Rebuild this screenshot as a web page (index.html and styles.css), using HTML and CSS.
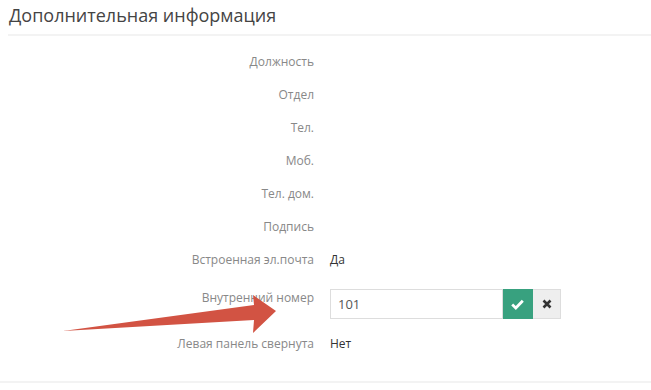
FILE: index.html
```html
<!DOCTYPE html>
<html lang="ru">
<head>
<meta charset="UTF-8">
<title>Дополнительная информация</title>
<link rel="stylesheet" href="styles.css">
</head>
<body>
<div class="section">
  <h3 class="section-title">Дополнительная информация</h3>
  <div class="fields">
    <div class="row"><div class="label">Должность</div><div class="value"></div></div>
    <div class="row"><div class="label">Отдел</div><div class="value"></div></div>
    <div class="row"><div class="label">Тел.</div><div class="value"></div></div>
    <div class="row"><div class="label">Моб.</div><div class="value"></div></div>
    <div class="row"><div class="label">Тел. дом.</div><div class="value"></div></div>
    <div class="row"><div class="label">Подпись</div><div class="value"></div></div>
    <div class="row"><div class="label">Встроенная эл.почта</div><div class="value">Да</div></div>
    <div class="row row-edit">
      <div class="label">Внутренний номер</div>
      <div class="value">
        <div class="inline-edit">
          <input class="edit-input" type="text" value="101">
          <button class="btn btn-ok">
            <svg width="13" height="11" viewBox="0 0 13 11"><path d="M1.2 5.6 L4.8 9 L11.8 1.8" fill="none" stroke="#fff" stroke-width="2.8" stroke-linejoin="miter"/></svg>
          </button>
          <button class="btn btn-cancel">
            <svg width="10" height="10" viewBox="0 0 10 10"><path d="M1.5 1.5 L8.5 8.5 M8.5 1.5 L1.5 8.5" stroke="#333" stroke-width="2.6"/></svg>
          </button>
        </div>
      </div>
    </div>
    <div class="row"><div class="label">Левая панель свернута</div><div class="value">Нет</div></div>
  </div>
  <div class="section-end"></div>
</div>

<!-- annotation arrow over the form -->
<svg class="arrow" width="651" height="390" viewBox="0 0 651 390">
  <polygon points="63,331 254,305 253,295 276,311 253,333 254,320" fill="#d25343"/>
</svg>
</body>
</html>
```

FILE: styles.css
```css
body{
  margin: 0;
  background: #fff;
  font-family: 'Open Sans', 'Liberation Sans', sans-serif;
  font-size: 12px;
  color: #333;
  position: relative;
}
.section-title{
  margin: 0 0 0 8px;
  padding: 4px 0 8px 1px;
  font-size: 18px;
  font-weight: 400;
  line-height: 22px;
  color: #444;
  border-bottom: 2px solid #f3f3f3;
}
.fields{
  padding-top: 9px;
}
.row{
  display: grid;
  grid-template-columns: 314px 1fr;
  column-gap: 16px;
  padding: 8px 0;
  line-height: 17px;
}
.label{
  text-align: right;
  color: #888;
}
.value{
  color: #333;
}
.row-edit{
  padding: 13px 0 8px;
}
.inline-edit{
  display: flex;
  height: 30px;
}
.edit-input{
  width: 173px;
  height: 30px;
  box-sizing: border-box;
  border: 1px solid #ddd;
  padding: 0 7px;
  font-family: inherit;
  font-size: 13px;
  color: #555;
  outline: none;
}
.btn{
  height: 30px;
  border: 1px solid #ddd;
  border-left: none;
  padding: 0;
  display: flex;
  align-items: center;
  justify-content: center;
}
.btn-ok{
  width: 30px;
  background: #38a17f;
  border-color: #38a17f;
}
.btn-cancel{
  width: 28px;
  background: #eee;
}
.section-end{
  margin-top: 21px;
  border-bottom: 2px solid #f3f3f3;
}
.arrow{
  position: absolute;
  top: 0;
  left: 0;
  pointer-events: none;
}
```
